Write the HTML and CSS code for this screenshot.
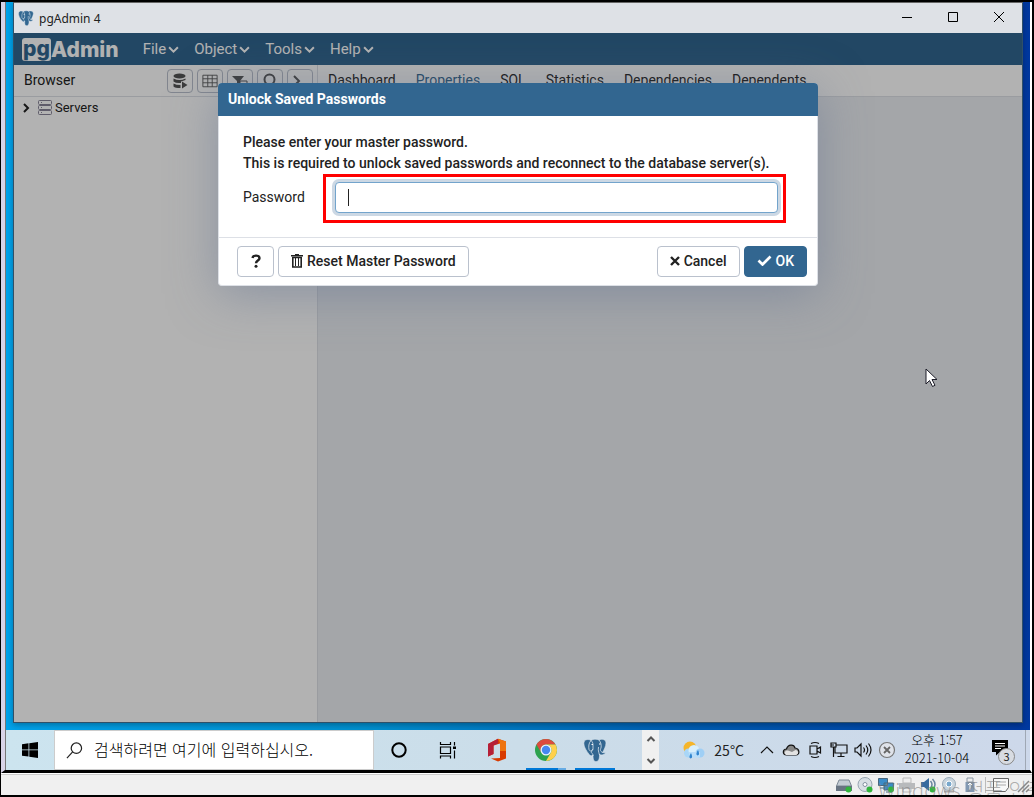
FILE: index.html
```html
<!DOCTYPE html>
<html lang="ko">
  <head>
    <meta charset="UTF-8">
    <title>pgAdmin 4</title>
    <link rel="stylesheet" href="styles.css">
  </head>
  <body>
    <!-- Shared icons -->
    <svg class="sprite" aria-hidden="true">
      <symbol id="elephant" viewBox="0 0 24 24">
        <path d="M1 4C2 1 6 1 8 2.500C10 .8 14 .8 16 2C19 .5 23 1.500 23 5C23 8 21 12 19.500 14.500C20.500 15 22 14.500 22.500 15C21.500 17 18 17.500 16.500 16.500C16.500 19 16.500 23 13.500 23.500C10.500 23.800 10 21.500 10 17C8.500 18.500 6.500 17.500 5.500 15.500C3.500 13 .2 8 1 4Z" fill="#336791" stroke="#dce6ee" stroke-width=".6"/>
        <path d="M8 2.500C5.500 5 5.500 9 6 11.500C7 14 9 13 10 11V7C10 4.500 9 3.500 8 2.500M16 2C18 4.500 18.500 7 18 10C17 12 17 13 19.500 14.500M10 11C9 13 7.500 14.500 9 15.500C10 16 10 16.500 10 18M16.500 17C15.500 13 15 13 15.500 9" fill="none" stroke="#eef4f8" stroke-width=".7"/>
        <path d="M8.500 6.500h1.500M16 6h1.500" stroke="#fff" stroke-width="1.200"/>
      </symbol>
      <symbol id="chevron" viewBox="0 0 10 10">
        <path d="M1 3L5 7L9 3" fill="none" stroke="currentColor" stroke-width="1.800"/>
      </symbol>
    </svg>

    <main class="screen">
      <div class="desktop">
        <section class="window">
          <header class="titlebar">
            <svg class="titlebar-icon"><use href="#elephant"/></svg>
            <span class="titlebar-text">pgAdmin 4</span>
            <button class="win-btn" aria-label="Minimize"><svg viewBox="0 0 12 12"><path d="M1 6.500h10"/></svg></button>
            <button class="win-btn" aria-label="Maximize"><svg viewBox="0 0 12 12"><path d="M1.500 1.500h9v9h-9z"/></svg></button>
            <button class="win-btn" aria-label="Close"><svg viewBox="0 0 12 12"><path d="M1 1l10 10M11 1L1 11"/></svg></button>
          </header>

          <div class="app">
            <nav class="navbar">
              <a class="brand" href="#"><span class="brand-pg">pg</span><span class="brand-admin">Admin</span></a>
              <a class="menu" href="#">File<svg><use href="#chevron"/></svg></a>
              <a class="menu" href="#">Object<svg><use href="#chevron"/></svg></a>
              <a class="menu" href="#">Tools<svg><use href="#chevron"/></svg></a>
              <a class="menu" href="#">Help<svg><use href="#chevron"/></svg></a>
            </nav>

            <div class="panels">
              <aside class="browser">
                <div class="browser-head">
                  <span class="browser-title">Browser</span>
                  <button class="tool" aria-label="Query Tool"><svg viewBox="0 0 16 16"><ellipse cx="7.500" cy="3" rx="6" ry="2.500"/><path d="M1.500 5.500Q7.500 8.500 13.500 5.500V7L9 8.500V10Q4 10.500 1.500 8.500zM1.500 10.500Q4 12 8.500 12V15Q3 15 1.500 13.500zM10 8.500L15.500 12L10 15.500z"/></svg></button>
                  <button class="tool" aria-label="View Data"><svg viewBox="0 0 18 16"><path class="line" d="M1 1.500h16v13H1zM1 5.500h16M1 10h16M6.500 1.500v13M11.500 1.500v13"/></svg></button>
                  <button class="tool" aria-label="Filtered Rows"><svg viewBox="0 0 16 16"><path d="M0 3h12L8 8v6l-3-3V8z"/><path class="line" d="M8 8h7v6H8zM8 11h7"/></svg></button>
                  <button class="tool" aria-label="Search Objects"><svg viewBox="0 0 16 16"><circle class="heavy" cx="7.500" cy="6.500" r="5"/><path class="heavy" d="M11 10l4 5"/></svg></button>
                  <button class="tool" aria-label="PSQL Tool"><svg viewBox="0 0 16 16"><path class="heavy" d="M2 3l5 5l-5 5M8 14h7"/></svg></button>
                </div>
                <div class="tree-item">
                  <svg class="tree-arrow" viewBox="0 0 8 10"><path d="M2 1l4 4l-4 4"/></svg>
                  <svg class="tree-server" viewBox="0 0 14 15"><rect x=".5" y=".5" width="13" height="4" rx="1"/><rect x=".5" y="5.500" width="13" height="4" rx="1"/><rect x=".5" y="10.500" width="13" height="4" rx="1"/><path d="M3 2.500h1M3 7.500h1M3 12.500h1"/></svg>
                  <span>Servers</span>
                </div>
              </aside>
              <div class="detail">
                <div class="tabs">
                  <a class="tab" href="#">Dashboard</a>
                  <a class="tab active" href="#">Properties</a>
                  <a class="tab" href="#">SQL</a>
                  <a class="tab" href="#">Statistics</a>
                  <a class="tab" href="#">Dependencies</a>
                  <a class="tab" href="#">Dependents</a>
                </div>
              </div>
            </div>

            <!-- Master password dialog -->
            <div class="backdrop">
              <form class="modal" onsubmit="return false;">
                <h3 class="modal-header">Unlock Saved Passwords</h3>
                <div class="modal-body">
                  <p class="message">Please enter your master password.<br>This is required to unlock saved passwords and reconnect to the database server(s).</p>
                  <div class="field">
                    <label for="password">Password</label>
                    <div class="input-wrap">
                      <input type="password" id="password" name="password">
                      <span class="caret"></span>
                      <span class="highlight"></span>
                    </div>
                  </div>
                </div>
                <div class="modal-footer">
                  <button type="button" class="btn help" aria-label="Help"><svg class="icon-help" viewBox="0 0 10 14"><path d="M1.500 4C2 .8 8.500 .8 8.500 4.200C8.500 6.500 5 6.500 5 9.200" fill="none" stroke="currentColor" stroke-width="2.400"/><circle cx="5" cy="12.300" r="1.500" fill="currentColor"/></svg></button>
                  <button type="button" class="btn"><svg class="icon-trash" viewBox="0 0 12 14"><path d="M0 1.800h12M4 .7h4" stroke="currentColor" stroke-width="1.400"/><path d="M1.800 3.500v9.500h8.400V3.500z" fill="none" stroke="currentColor" stroke-width="1.600"/><path d="M4.500 4v8M7.500 4v8" stroke="currentColor"/></svg>Reset Master Password</button>
                  <button type="button" class="btn cancel"><svg class="icon-times" viewBox="0 0 10 10"><path d="M1 1l8 8M9 1L1 9" stroke="currentColor" stroke-width="2.400"/></svg>Cancel</button>
                  <button type="submit" class="btn primary"><svg class="icon-check" viewBox="0 0 14 11"><path d="M1 5.500l4 4L13 1.500" fill="none" stroke="currentColor" stroke-width="2.700"/></svg>OK</button>
                </div>
              </form>
            </div>
          </div>
        </section>
      </div>

      <footer class="taskbar">
        <button class="start" aria-label="Start"><svg viewBox="0 0 16 16"><path d="M0 2.200L6.500 1.300V7.500H0zM7.300 1.200L16 0V7.500H7.300zM0 8.300h6.500v6.300L0 13.700zM7.300 8.300H16V16L7.300 14.800z"/></svg></button>
        <label class="search">
          <svg viewBox="0 0 18 18"><circle cx="11" cy="6.500" r="5.500"/><path d="M7 10.500L1 17"/></svg>
          <input type="text" aria-label="검색" placeholder="검색하려면 여기에 입력하십시오.">
        </label>
        <button class="task" aria-label="Cortana"><svg viewBox="0 0 20 20"><circle cx="10" cy="10" r="6.700" fill="none" stroke="#000" stroke-width="2"/></svg></button>
        <button class="task" aria-label="Task View"><svg viewBox="0 0 20 20"><path d="M2.500 2v2.500h10V2M2.500 7h10v6.500h-10zM2.500 18.500V16h10v2.500M16.500 2v3.500M16.500 10.500v8" fill="none" stroke="#000" stroke-width="1.200"/><path d="M15 6.500h3v2.500h-3z"/></svg></button>
        <button class="task" aria-label="Office"><svg class="app-icon" viewBox="0 0 24 24"><path d="M13 .8L21 3.500V20.500L13 23.500L6 20.500L15 20V5.500L8.500 7.500V16L3 18.500V6z" fill="#d83b01"/><path d="M3 6L13 .8V5.500L8.500 7.500V16L3 18.500z" fill="#b51f38"/><path d="M13 .8L21 3.500V13H15V5z" fill="#ee7410"/></svg></button>
        <button class="task chrome" aria-label="Chrome"><svg class="app-icon" viewBox="0 0 24 24"><circle cx="12" cy="12" r="11" fill="#2da24f"/><path d="M2.500 6.500A11 11 0 0 1 21.500 6.500H12A5.500 5.500 0 0 0 7.200 14.700z" fill="#dc4b3e"/><path d="M12 6.500H21.500A11 11 0 0 1 12 23L16.800 14.700A5.500 5.500 0 0 0 12 6.500" fill="#ffd04c"/><circle cx="12" cy="12" r="5.500" fill="#eef3fb"/><circle cx="12" cy="12" r="4.200" fill="#4688f1"/></svg></button>
        <button class="task running" aria-label="pgAdmin 4"><svg class="app-icon"><use href="#elephant"/></svg></button>

        <div class="tray">
          <div class="spin">
            <button aria-label="Up"><svg viewBox="0 0 10 8"><path d="M1.500 6L5 2.500L8.500 6"/></svg></button>
            <button aria-label="Down"><svg viewBox="0 0 10 8"><path d="M1.500 2L5 5.500L8.500 2"/></svg></button>
          </div>
          <button class="weather"><svg viewBox="0 0 22 18"><circle cx="7" cy="7" r="6.500" fill="#f5b52a"/><circle cx="5.500" cy="12" r="4.500" fill="#a9d6f7"/><circle cx="11" cy="9.500" r="5.500" fill="#d8effc"/><circle cx="17" cy="12" r="4.500" fill="#9fcff5"/><path d="M6 11h11v5.500H6z" fill="#b9defa"/><path d="M8 12q-3 4.500-.5 5.500q3-.5.500-5.500M15 9q-3 4.500-.5 5.500q3-.5.500-5.500" fill="#3185cf"/></svg>25°C</button>
          <button class="tray-icon" aria-label="Hidden icons"><svg viewBox="0 0 18 18"><path d="M3 12l6-6l6 6"/></svg></button>
          <button class="tray-icon" aria-label="OneDrive"><svg viewBox="0 0 18 18"><path d="M4.500 14C0 14 .5 8 4.500 8C6 3 12 3 13 7C18 7.500 18 14 14 14z" fill="#888"/><path d="M4 14C1.500 12 3 9 6 9.500L10 11L13.500 9C17 9.500 17 13.500 14 14z" fill="#e2e2e2" stroke="none"/></svg></button>
          <button class="tray-icon" aria-label="Meet Now"><svg viewBox="0 0 18 18"><path d="M5 2.500q4-2 8 0M5 15.500q4 2 8 0M4 5h7v8H4zM11 8l3.500-2v6L11 10"/></svg></button>
          <button class="tray-icon" aria-label="Network"><svg viewBox="0 0 18 18"><path d="M6 4h11v8H5V6M11 12v3.500M7.500 15.500h7M1 2h5v4H1zM3.500 6v10M1 4h3"/></svg></button>
          <button class="tray-icon" aria-label="Volume"><svg viewBox="0 0 18 18"><path d="M1 7h2l4-4v12l-4-4H1zM9.500 6.500q2 2.500 0 5M12 4.500q3.500 4.500 0 9M14.500 2.500q5 6.500 0 13"/></svg></button>
          <button class="tray-icon" aria-label="Input off"><svg viewBox="0 0 18 18"><circle cx="9" cy="9" r="7.500" fill="#dfe3ea" stroke="#777"/><path d="M6 6l6 6M12 6l-6 6" stroke="#666" stroke-width="1.800"/></svg></button>
          <button class="clock"><span>오후 1:57</span><span>2021-10-04</span></button>
          <button class="notice" aria-label="Notifications"><svg viewBox="0 0 18 18"><path d="M1 1h16v12H9L5 16.500V13H1z"/><path d="M4 4.500h10M4 7h10M4 9.500h6" stroke="#fff"/></svg><span class="badge">3</span></button>
          <button class="show-desktop" aria-label="Show desktop"></button>
        </div>
      </footer>
      <svg class="pointer" viewBox="0 0 13 20"><path d="M1 1v15l3.500-3.500l3 6l2.500-1.200l-3-5.800H12z" fill="#fff" stroke="#1c1c28"/></svg>
    </main>

    <!-- Virtual machine status bar -->
    <div class="vm-status">
      <svg viewBox="0 0 16 16"><path d="M3 3h10l2.500 6H.5z" fill="#c4ccd4" stroke="#7c8894"/><path d="M0 9h16v5H0z" fill="#687482"/><circle cx="12.500" cy="12.500" r="3" fill="#31b53c"/></svg>
      <svg viewBox="0 0 16 16"><circle cx="8" cy="7.500" r="7" fill="#d8dfe4" stroke="#98a5b0"/><circle cx="8" cy="7.500" r="2" fill="#fff" stroke="#8391a0"/><circle cx="12.500" cy="12.500" r="3" fill="#31b53c"/></svg>
      <svg viewBox="0 0 16 16"><path d="M.5 1.500h9v7h-9zM6 6h9.500v7H6z" fill="#3b8cc8" stroke="#49687f"/><path d="M2 11h4M8 15h6" stroke="#49687f"/><circle cx="13" cy="12.500" r="3" fill="#31b53c"/></svg>
      <svg viewBox="0 0 16 16"><path d="M4 1h8v5H4zM4 11h8v4H4z" fill="#eee" stroke="#bbb"/><path d="M0 6h16v6H0z" fill="#b8babc"/></svg>
      <svg viewBox="0 0 16 16"><path d="M1 5h3l5-4v13l-5-4H1z" fill="#376b9e"/><path d="M10.500 4q3 3.500 0 7M12.500 2q5 5.500 0 11" fill="none" stroke="#6b87a0" stroke-width="1.500"/><circle cx="12.500" cy="12.500" r="3" fill="#31b53c"/></svg>
      <svg viewBox="0 0 16 16"><circle cx="8" cy="7" r="6.500" fill="#c8d4dc" stroke="#9aabb8"/><circle cx="8" cy="7" r="3" fill="#78a8cc" stroke="#fff"/><path d="M3 14.500h10" stroke="#aaa" stroke-width="2"/></svg>
      <svg viewBox="0 0 16 16"><path d="M5 1h6v4H5z" fill="#eee" stroke="#8b97a3"/><path d="M3.500 5h9v10h-9z" fill="#8299b2"/><path d="M8 6v7M6 8l2-2l2 2" fill="none" stroke="#fff"/></svg>
      <span class="separator"></span>
      <svg viewBox="0 0 16 16"><path d="M.5 1.500h15v9l-3 4h-12z" fill="#f8f8f8" stroke="#666"/><path d="M3 5h10M3 8h10" stroke="#aaa"/></svg>
      <svg class="grip" viewBox="0 0 16 16"><path d="M4 15L15 4M8 15l7-7M12 15l3-3" stroke="#888" stroke-width="1.500"/></svg>
      <span class="watermark">Windows 정품 인증</span>
    </div>
  </body>
</html>
```

FILE: styles.css
```css
* {
  box-sizing: border-box;
}

body {
  display: flex;
  flex-direction: column;
  height: 100vh;
  margin: 0;
  padding: 2px 2px 2px 1px;
  background-color: #000;
  color: #222;
  font-family: Roboto, "Liberation Sans", sans-serif;
  font-size: 14px;
  overflow: hidden;
}

button {
  padding: 0;
  border: none;
  background: none;
  font-family: inherit;
  color: inherit;
}

a {
  color: inherit;
  text-decoration: none;
}

.sprite {
  position: absolute;
  width: 0;
  height: 0;
}

/* Guest screen */
.screen {
  position: relative;
  flex: 1;
  min-height: 0;
  display: flex;
  flex-direction: column;
  border-left: 4px solid #d8d4e8;
  border-right: 2px solid #fff;
  border-bottom: 3px solid #000;
  box-shadow: inset 1px 0 #777;
  padding-left: 1px;
}

.desktop {
  flex: 1;
  min-height: 0;
  display: flex;
  padding: 0 7px 7px;
  background: linear-gradient(90deg, #00a2ea, #0090d0 35%, #0060b5 65%, #0038a0);
}

.window {
  flex: 1;
  display: flex;
  flex-direction: column;
  border: 1px solid #305068;
  border-top-color: #666;
  box-shadow: 0 2px 6px rgba(0, 0, 0, 0.3);
}

.titlebar {
  display: flex;
  align-items: center;
  height: 30px;
  padding-left: 4px;
  background-color: #dee1e6;
  font-family: "Noto Sans", "Noto Sans CJK KR", sans-serif;
  font-size: 12px;
}

.titlebar-icon {
  width: 16px;
  height: 16px;
}

.titlebar-text {
  flex: 1;
  margin-left: 5px;
}

.win-btn {
  width: 46px;
  height: 30px;
}

.win-btn svg {
  width: 12px;
  height: 12px;
  fill: none;
  stroke: #000;
}

/* pgAdmin */
.app {
  position: relative;
  flex: 1;
  display: flex;
  flex-direction: column;
}

.navbar {
  display: flex;
  align-items: center;
  height: 32px;
  padding-left: 8px;
  background-color: #326690;
  color: #fff;
  font-size: 15px;
}

.brand {
  display: flex;
  align-items: center;
  margin-right: 9px;
  font-family: Inter, "Open Sans", sans-serif;
  font-size: 21px;
  font-weight: 800;
  line-height: 21px;
}

.brand-pg {
  width: 29px;
  height: 23px;
  border-radius: 3px;
  background-color: #fff;
  color: #326690;
  text-align: center;
}

.menu {
  display: flex;
  align-items: center;
  gap: 2px;
  margin-left: 15px;
}

.menu svg {
  width: 11px;
  height: 11px;
}

.panels {
  flex: 1;
  display: flex;
}

.browser {
  width: 304px;
  border-right: 1px solid #dde0e6;
  background-color: #fff;
}

.browser-head {
  display: flex;
  align-items: center;
  gap: 4px;
  height: 32px;
  padding: 0 4px 0 10px;
  border-bottom: 1px solid #dde0e6;
}

.browser-title {
  flex: 1;
  padding-bottom: 2px;
}

.tool {
  display: flex;
  align-items: center;
  justify-content: center;
  width: 26px;
  height: 24px;
  border: 1px solid #bac1cd;
  border-radius: 4px;
}

.tool svg {
  width: 16px;
  height: 16px;
  fill: #555;
}

.tool .line,
.tool .heavy {
  fill: none;
  stroke: #555;
}

.tool .heavy {
  stroke-width: 2;
}

.tree-item {
  display: flex;
  align-items: center;
  height: 21px;
  padding-left: 8px;
  font-size: 13px;
}

.tree-arrow {
  width: 8px;
  height: 10px;
  margin-right: 8px;
  fill: none;
  stroke: #222;
  stroke-width: 2;
}

.tree-server {
  width: 14px;
  height: 15px;
  margin-right: 3px;
  fill: #fff;
  stroke: #888598;
}

.detail {
  flex: 1;
  background-color: #ebeef3;
}

.tabs {
  display: flex;
  align-items: center;
  gap: 20px;
  height: 32px;
  padding: 0 10px 2px;
  border-bottom: 1px solid #dde0e6;
  background-color: #fff;
}

.tab.active {
  color: #326690;
}

/* Dialog */
.backdrop {
  position: absolute;
  inset: 0;
  display: flex;
  align-items: flex-start;
  justify-content: center;
  padding-top: 50px;
  background-color: rgba(0, 0, 0, 0.3);
  overflow: hidden;
}

.modal {
  width: 600px;
  border: 1px solid #dde0e6;
  border-top: none;
  border-radius: 4px;
  background-color: #fff;
  box-shadow: 0 8px 48px rgba(100, 115, 145, 0.5);
}

.modal-header {
  height: 33px;
  margin: 0 -1px;
  padding-left: 10px;
  border-radius: 4px 4px 0 0;
  background-color: #326690;
  color: #fff;
  font-size: 14px;
  font-weight: bold;
  line-height: 33px;
}

.modal-body {
  padding: 16px 39px 24px 24px;
}

.message {
  margin: 0 -20px 8px 0;
  font-weight: 500;
  line-height: 21px;
}

.field {
  display: flex;
  align-items: center;
}

.field label {
  width: 92px;
  padding-bottom: 2px;
}

.input-wrap {
  position: relative;
  flex: 1;
  height: 31px;
}

.input-wrap input {
  width: 100%;
  height: 31px;
  padding: 0 12px;
  border: 1px solid #73a4cc;
  border-radius: 4px;
  outline: none;
  box-shadow: 0 0 0 3px #ccd8e4;
  font-size: 14px;
}

.caret {
  position: absolute;
  top: 7px;
  left: 13px;
  width: 1px;
  height: 17px;
  background-color: #222;
}

.highlight {
  position: absolute;
  inset: -8px -8px -10px -12px;
  border: 3px solid #f00;
  pointer-events: none;
}

.modal-footer {
  display: flex;
  gap: 4px;
  padding: 8px 10px 8px 18px;
  border-top: 1px solid #dde0e6;
}

.btn {
  display: flex;
  align-items: center;
  justify-content: center;
  gap: 4px;
  height: 31px;
  padding: 0 12px 2px;
  border: 1px solid #bac1cd;
  border-radius: 4px;
  font-size: 14px;
  font-weight: 500;
}

.help {
  width: 37px;
}

.cancel {
  margin-left: auto;
}

.primary {
  border-color: #326690;
  background-color: #326690;
  color: #fff;
}

.icon-help {
  width: 10px;
  height: 14px;
}

.icon-trash {
  width: 12px;
  height: 14px;
}

.icon-times {
  width: 10px;
  height: 10px;
}

.icon-check {
  width: 15px;
  height: 11px;
}

/* Taskbar */
.taskbar {
  display: flex;
  height: 40px;
  background: linear-gradient(90deg, #cce4ef, #cbdde9 50%, #cdd8ea);
  color: #222;
  font-family: "Noto Sans CJK KR", sans-serif;
}

.start {
  display: flex;
  align-items: center;
  justify-content: center;
  width: 48px;
}

.start svg {
  width: 16px;
  height: 16px;
}

.search {
  display: flex;
  align-items: center;
  gap: 11px;
  width: 320px;
  padding-left: 11px;
  border: 1px solid #ccc;
  background-color: #fff;
}

.search svg {
  width: 17px;
  height: 17px;
  fill: none;
  stroke: #222;
  stroke-width: 1.3;
}

.search input {
  flex: 1;
  min-width: 0;
  padding: 0 0 2px;
  border: none;
  outline: none;
  font-family: inherit;
  font-size: 16px;
  font-weight: 300;
}

.search input::placeholder {
  color: #000;
}

.task {
  display: flex;
  align-items: center;
  justify-content: center;
  position: relative;
  width: 49px;
}

.task svg {
  width: 20px;
  height: 20px;
}

.task .app-icon {
  width: 24px;
  height: 24px;
}

.running::after,
.chrome::after {
  content: "";
  position: absolute;
  bottom: 0;
  left: 5px;
  width: 40px;
  height: 2px;
  background-color: #0078d7;
}

.chrome::after {
  background: linear-gradient(90deg, #0078d7 80%, #66abe4 80%);
}

.tray {
  display: flex;
  align-items: center;
  margin-left: auto;
}

.spin {
  display: flex;
  flex-direction: column;
  justify-content: space-between;
  width: 17px;
  height: 40px;
  margin-right: 24px;
  padding: 3px 0;
  background-color: #f0f0f0;
}

.spin button {
  height: 12px;
  line-height: 0;
}

.spin svg {
  width: 10px;
  height: 8px;
  fill: none;
  stroke: #555;
  stroke-width: 2;
}

.weather {
  display: flex;
  align-items: center;
  gap: 9px;
  margin-right: 11px;
  font-size: 14px;
}

.weather svg {
  width: 22px;
  height: 18px;
}

.tray-icon {
  display: flex;
  justify-content: center;
  width: 24px;
}

.tray-icon svg {
  width: 18px;
  height: 18px;
  fill: none;
  stroke: #111;
  stroke-width: 1.2;
}

.clock {
  display: flex;
  flex-direction: column;
  width: 76px;
  padding-bottom: 2px;
  color: #000;
  font-size: 13px;
  font-weight: 300;
  line-height: 18px;
  text-align: center;
}

.notice {
  position: relative;
  width: 50px;
  height: 40px;
}

.notice svg {
  width: 18px;
  height: 18px;
}

.badge {
  position: absolute;
  top: 18px;
  left: 23px;
  width: 17px;
  height: 17px;
  border: 1px solid #888;
  border-radius: 50%;
  background-color: #d8dce2;
  font-size: 11px;
  line-height: 15px;
}

.show-desktop {
  width: 5px;
  height: 40px;
  border-left: 1px solid #a0a8b4;
}

.pointer {
  position: absolute;
  top: 366px;
  left: 920px;
  width: 13px;
  height: 20px;
}

/* VM status bar */
.vm-status {
  position: relative;
  display: flex;
  align-items: center;
  justify-content: flex-end;
  gap: 5px;
  height: 22px;
  padding-right: 2px;
  border-top: 1px solid #fff;
  box-shadow: inset 0 1px #ccc;
  background-color: #f0f0f0;
  overflow: hidden;
}

.vm-status svg {
  width: 16px;
  height: 16px;
}

.separator {
  width: 1px;
  height: 16px;
  margin: 0 2px;
  background-color: #bbb;
}

.watermark {
  position: absolute;
  top: 3px;
  left: 877px;
  color: rgba(130, 130, 130, 0.6);
  font-family: "Noto Sans CJK KR", sans-serif;
  font-size: 20px;
  font-weight: 300;
  line-height: 26px;
  white-space: nowrap;
}
```
